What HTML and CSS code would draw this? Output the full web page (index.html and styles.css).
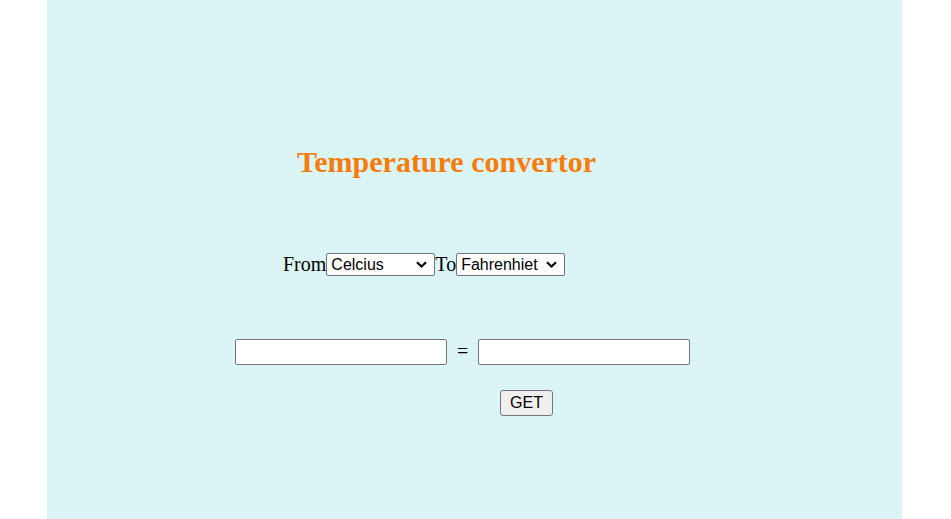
FILE: index.html
```html
<!DOCTYPE html>
<html>
<head>
<meta charset="utf-8">
<title>Temperature convertor</title>
<link rel="stylesheet" href="styles.css">
</head>
<body>
<div class="page">
  <h1 class="title">Temperature convertor</h1>
  <div class="units">
    <span class="label">From</span>
    <select class="unit-select">
      <option>Celcius</option>
      <option>Fahrenhiet</option>
      <option>Kelvin</option>
    </select>
    <span class="label">To</span>
    <select class="unit-select">
      <option>Fahrenhiet</option>
      <option>Celcius</option>
      <option>Kelvin</option>
    </select>
  </div>
  <div class="values">
    <input class="value-input" type="text">
    <span class="equals">=</span>
    <input class="value-input" type="text">
  </div>
  <div class="actions">
    <button class="get-btn">GET</button>
  </div>
</div>
</body>
</html>
```
FILE: styles.css
```css
html, body {
  margin: 0;
  padding: 0;
  background: #ffffff;
}
body {
  font-family: "Liberation Serif", "Times New Roman", serif;
  color: #000;
}
.page {
  width: 855px;
  margin: 0 auto 0 47px;
  min-height: 100vh;
  background: #daf5f6;
  box-sizing: border-box;
  padding-top: 143px;
}
.title {
  margin: 0 0 0 250px;
  font-size: 30px;
  line-height: 37px;
  font-weight: bold;
  color: #f77c0c;
}
.units {
  display: flex;
  align-items: center;
  margin-top: 73px;
  padding-left: 236px;
  height: 23px;
}
.label {
  font-size: 20px;
  line-height: 23px;
}
.unit-select {
  -webkit-appearance: none;
  appearance: none;
  font-family: "Liberation Sans", Arial, sans-serif;
  font-size: 16px;
  height: 23px;
  width: 109px;
  box-sizing: border-box;
  margin: 0;
  padding: 0 0 0 4px;
  color: #000;
  background-color: #fff;
  border: 1px solid #767676;
  border-radius: 2px;
  background-image: url("data:image/svg+xml;utf8,<svg xmlns='http://www.w3.org/2000/svg' width='11' height='7' viewBox='0 0 11 7'><path d='M1 1.2 L5.5 5.5 L10 1.2' fill='none' stroke='black' stroke-width='2.2'/></svg>");
  background-repeat: no-repeat;
  background-position: right 7px center;
}
.values {
  display: flex;
  align-items: center;
  margin-top: 63px;
  padding-left: 188px;
}
.value-input {
  width: 212px;
  height: 26px;
  box-sizing: border-box;
  margin: 0;
  font-family: "Liberation Sans", Arial, sans-serif;
  font-size: 16px;
  border: 1px solid #767676;
  border-radius: 2px;
  background: #fff;
}
.equals {
  font-size: 20px;
  padding: 0 10px;
  line-height: 23px;
  position: relative;
  top: -1px;
}
.actions {
  margin-top: 25px;
  padding-left: 453px;
}
.get-btn {
  width: 53px;
  height: 26px;
  box-sizing: border-box;
  margin: 0;
  font-family: "Liberation Sans", Arial, sans-serif;
  font-size: 16px;
  background: #efefef;
  border: 1px solid #767676;
  border-radius: 3px;
  color: #000;
  padding: 0;
}
```
